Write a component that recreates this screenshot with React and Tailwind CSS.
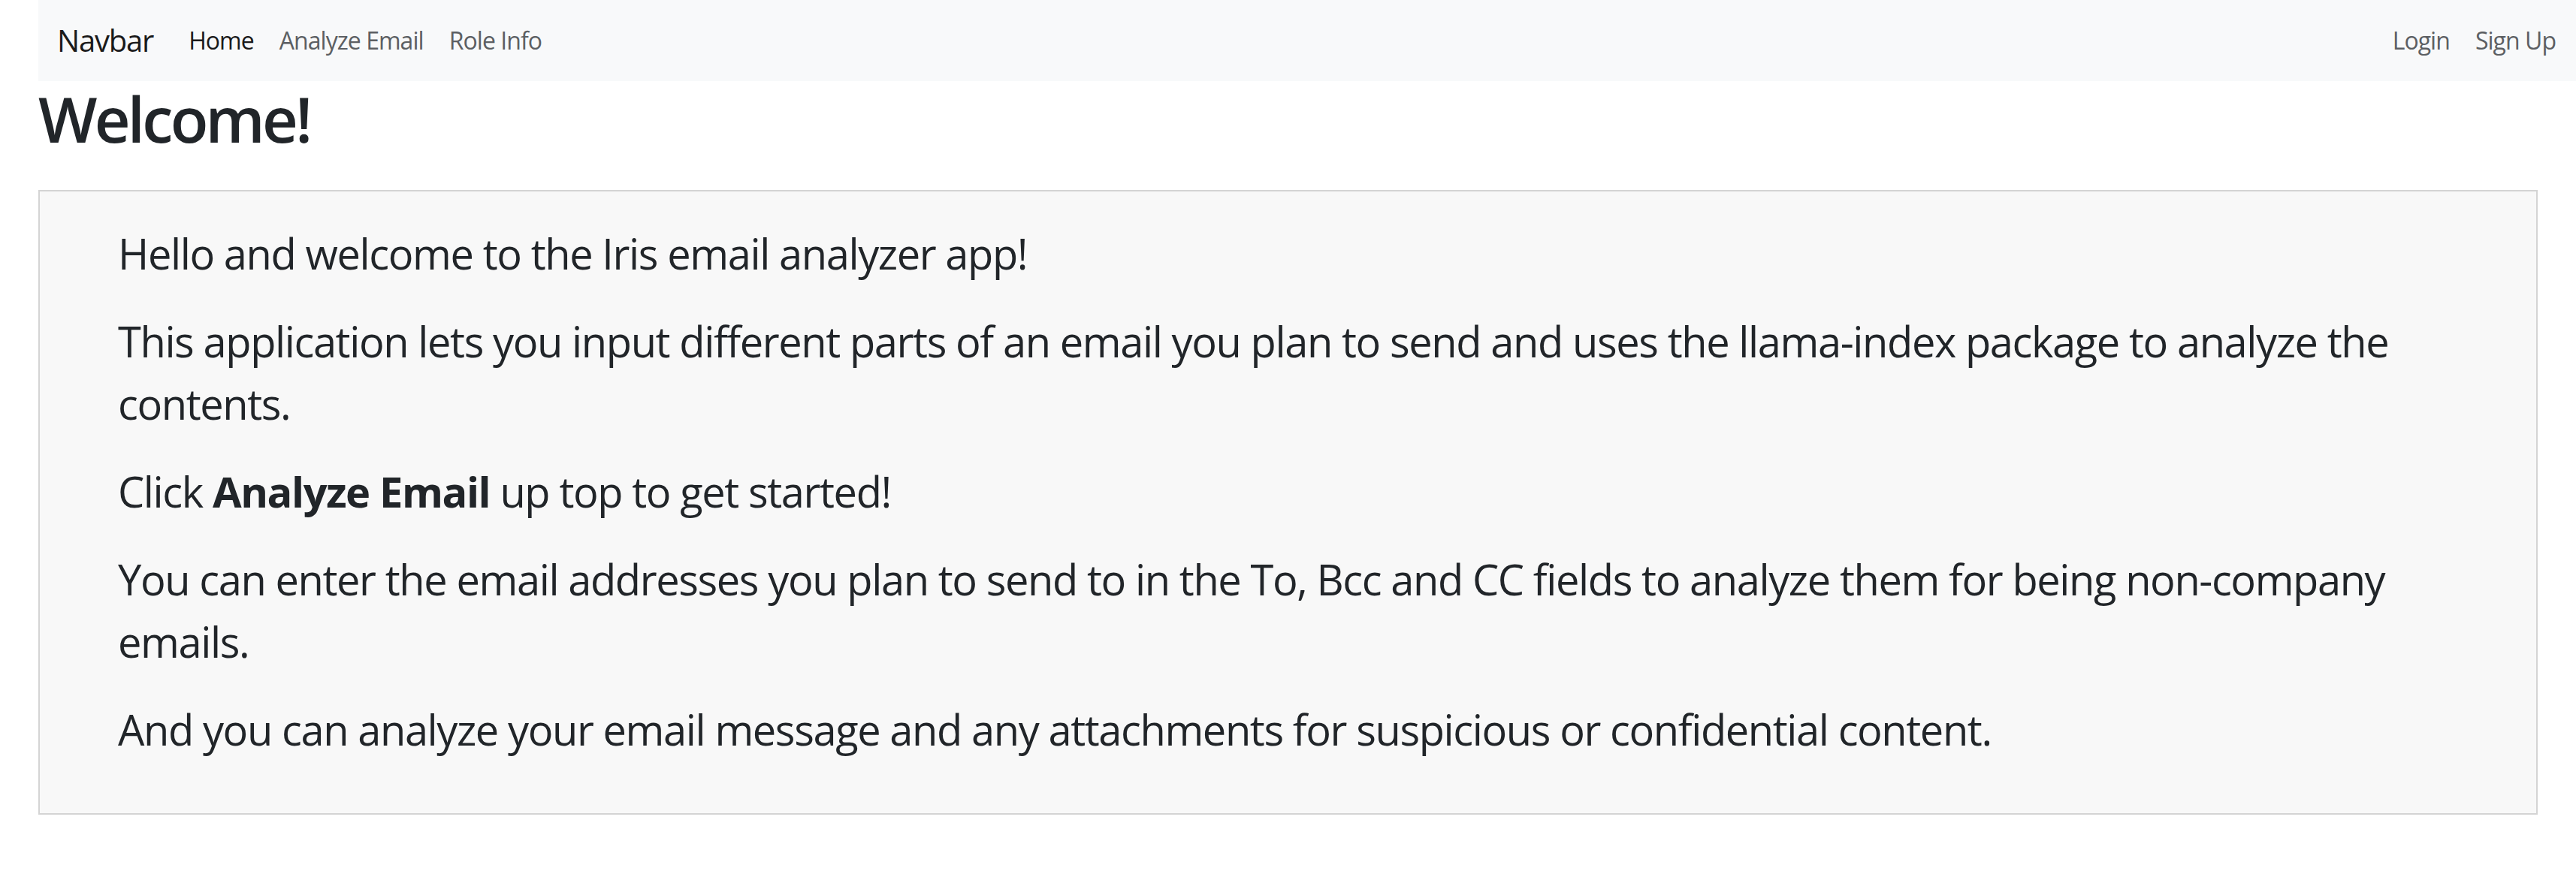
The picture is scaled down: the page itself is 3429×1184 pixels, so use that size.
const leftLinks = [
  { label: "Home", active: true },
  { label: "Analyze Email" },
  { label: "Role Info" },
];

const rightLinks = ["Login", "Sign Up"];

function NavBar() {
  return (
    <nav className="h-[108px] bg-[#f8f9fa] flex items-center pl-[25px] pr-[10px]">
      <a href="#" className="text-[40px] leading-none tracking-[-0.03em] text-[#1a1a1a] mr-[30px]">
        Navbar
      </a>
      {leftLinks.map((link) => (
        <a
          key={link.label}
          href="#"
          className={`text-[32px] leading-none tracking-[-0.03em] px-[17px] ${link.active ? "text-[#1a1a1a]" : "text-[#5c5f63]"}`}
        >
          {link.label}
        </a>
      ))}
      <div className="ml-auto flex items-center">
        {rightLinks.map((label) => (
          <a key={label} href="#" className="text-[32px] leading-none tracking-[-0.03em] px-[17px] text-[#5c5f63]">
            {label}
          </a>
        ))}
      </div>
    </nav>
  );
}

export default function App() {
  return (
    <div className="min-h-screen bg-white pl-[51px] text-[#212529] font-['Open_Sans',sans-serif]">
      <NavBar />
      <div className="pr-[51px]">
        <h1 className="text-[83px] leading-[1.2] font-semibold tracking-[-0.045em] mb-[45px]">Welcome!</h1>
        <div className="border-2 border-[#d4d4d4] bg-[#f8f8f8] pl-[104px] pr-[106px] pt-[41px] pb-[36px] text-[56px] leading-[83px] tracking-[-0.025em]">
          <p className="mb-[34px]">Hello and welcome to the Iris email analyzer app!</p>
          <p className="mb-[34px]">
            This application lets you input different parts of an email you plan to send and uses the llama-index
            package to analyze the contents.
          </p>
          <p className="mb-[34px]">
            Click <b className="font-bold">Analyze Email</b> up top to get started!
          </p>
          <p className="mb-[34px]">
            You can enter the email addresses you plan to send to in the To, Bcc and CC fields to analyze them for
            being non-company emails.
          </p>
          <p className="mb-[34px]">
            And you can analyze your email message and any attachments for suspicious or confidential content.
          </p>
        </div>
      </div>
    </div>
  );
}
